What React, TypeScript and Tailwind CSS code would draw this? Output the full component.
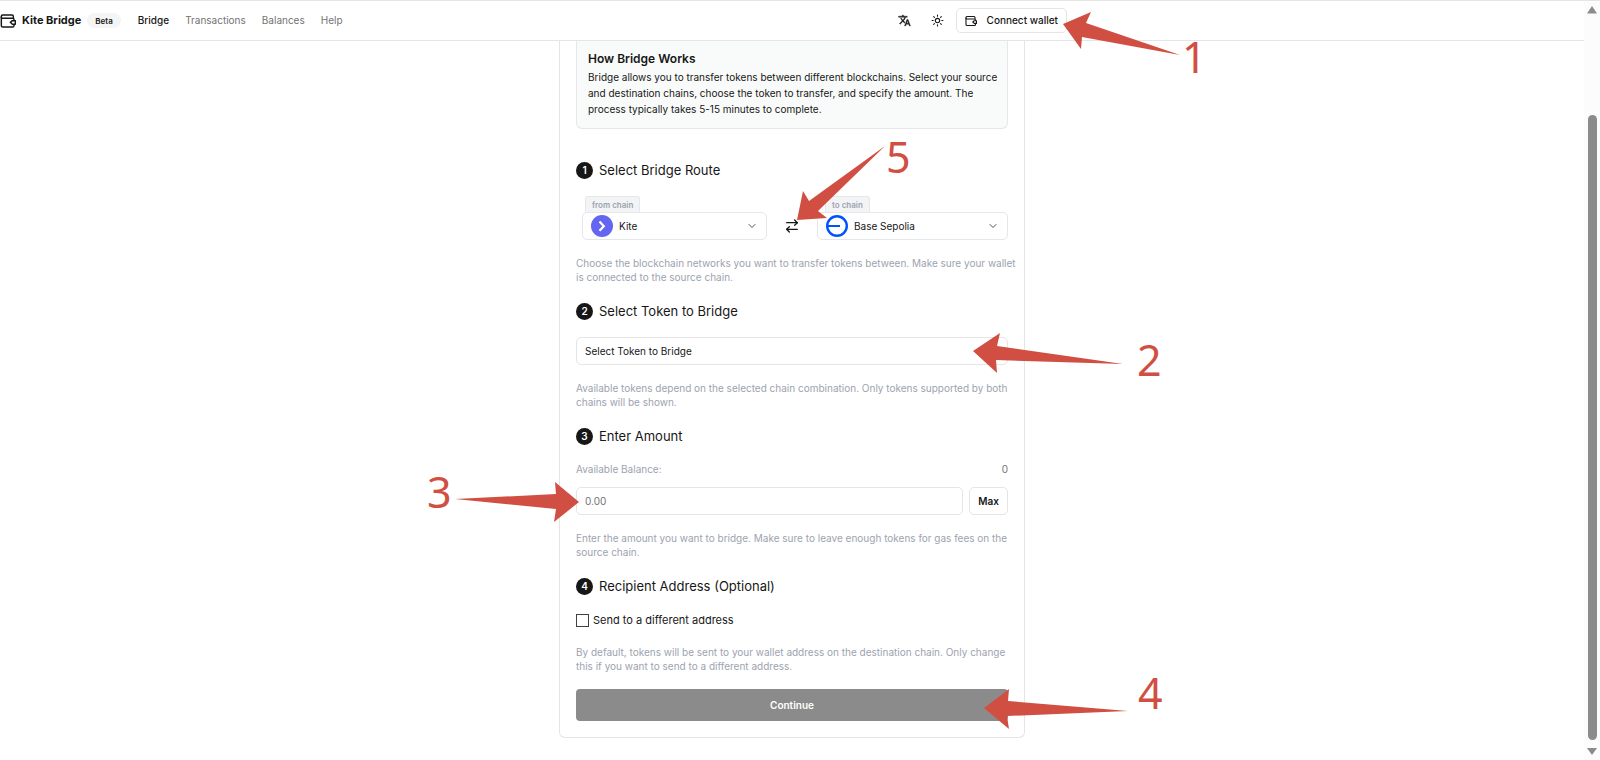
import { useState, type ReactNode } from "react";
import { ArrowRightLeft, ChevronDown, Sun } from "lucide-react";

function WalletIcon({ className }: { className: string }) {
  return (
    <svg viewBox="0 0 24 24" fill="none" stroke="currentColor" strokeWidth="2.200" strokeLinejoin="round" className={className} aria-hidden="true">
      <path d="M20 8V5a2 2 0 0 0-2-2H4a2 2 0 0 0-2 2v14a2 2 0 0 0 2 2h15a2 2 0 0 0 2-2v-2" />
      <path d="M2 5.500A2 2 0 0 0 4 8h15a2 2 0 0 1 2 2v1.500" />
      <path d="M23 11.500h-4.500L15.500 14l3 2.800H23z" />
    </svg>
  );
}

function TranslateIcon() {
  return (
    <svg viewBox="0 0 24 24" fill="currentColor" stroke="currentColor" strokeWidth="0.700" className="size-[13px]" aria-hidden="true">
      <path d="M12.870 15.070l-2.540-2.510.03-.03A17.520 17.520 0 0 0 14.070 6H17V4h-7V2H8v2H1v1.990h11.170C11.500 7.920 10.440 9.750 9 11.350 8.070 10.320 7.300 9.190 6.690 8h-2c.73 1.630 1.730 3.170 2.980 4.560l-5.090 5.020L4 19l5-5 3.110 3.110.76-2.040zM18.500 10h-2L12 22h2l1.120-3h4.750L21 22h2l-4.500-12zm-2.620 7l1.620-4.330L19.120 17h-3.240z" />
    </svg>
  );
}

function KiteLogo() {
  return (
    <svg viewBox="0 0 22 22" className="size-[22px] shrink-0" aria-hidden="true">
      <circle cx="11" cy="11" r="11" fill="#6366f1" />
      <path d="M8.500 6.500 12.800 11.200 8.500 15.800" fill="none" stroke="#fff" strokeWidth="2.200" />
    </svg>
  );
}

function BaseLogo() {
  return (
    <svg viewBox="0 0 22 22" className="size-[22px] shrink-0" aria-hidden="true">
      <circle cx="11" cy="11" r="9.800" fill="#fff" stroke="#0052ff" strokeWidth="2.400" />
      <path d="M1 11h13" stroke="#0052ff" strokeWidth="2" />
    </svg>
  );
}

function Step({ number, title, children, help }: { number: number; title: string; children: ReactNode; help: string }) {
  return (
    <section className="flex flex-col gap-4">
      <h2 className="flex h-[21px] items-center gap-1.5 pt-0.5 text-[13px]">
        <span className="flex size-[17px] items-center justify-center rounded-full bg-[#171717] text-[10px] font-semibold text-white">
          {number}
        </span>
        {title}
      </h2>
      {children}
      <p className="-mr-2.5 text-[10px] leading-[14px] text-[#9ca3af]">{help}</p>
    </section>
  );
}

function ChainSelect({ id, logo, value }: { id: string; logo: ReactNode; value: string }) {
  return (
    <div className="relative flex h-7 w-full items-center gap-1.5 rounded-[5px] border border-[#e5e7eb] bg-white pl-2">
      {logo}
      <select id={id} className="h-full min-w-0 flex-1 appearance-none bg-transparent text-[10px] outline-none">
        <option>{value}</option>
      </select>
      <ChevronDown className="pointer-events-none absolute right-2 size-3 text-[#525252]" />
    </div>
  );
}

function ChainLabel({ htmlFor, children }: { htmlFor: string; children: ReactNode }) {
  return (
    <label htmlFor={htmlFor} className="flex h-4 w-fit items-center rounded-t-[3px] border border-b-0 border-[#e5e7eb] bg-[#f3f4f6] px-1.5 text-[8px] font-semibold text-[#9ca3af]">
      {children}
    </label>
  );
}

const arrows = [
  "1063,24 1091,12 1086,23 1180,55 1082,37 1081,49",
  "797,220 803,191 809,201 885,146 818,211 827,218",
  "973,351 1000,333 997,346 1123,364 996,360 997,373",
  "579,502 555,482 556,494 455,499 556,509 554,522",
  "984,708 1009,689 1008,701 1128,711 1007,716 1009,729",
];

const arrowLabels = [
  { text: "1", x: 1182, y: 73 },
  { text: "2", x: 1137, y: 376 },
  { text: "3", x: 427, y: 508 },
  { text: "4", x: 1138, y: 709 },
  { text: "5", x: 886, y: 173 },
];

function Annotations() {
  return (
    <svg width="1600" height="760" viewBox="0 0 1600 760" className="pointer-events-none absolute -top-px left-1/2 z-20 -translate-x-1/2" fill="#d14f42">
      {arrows.map((points) => (
        <polygon key={points} points={points} />
      ))}
      {arrowLabels.map((l) => (
        <text key={l.text} x={l.x} y={l.y} className="font-['Noto_Sans',sans-serif] text-[43px]">
          {l.text}
        </text>
      ))}
    </svg>
  );
}

export default function App() {
  const [amount, setAmount] = useState("");
  return (
    <div className="relative flex min-h-screen overflow-x-clip border-t border-[#e5e5e5] bg-white font-['Inter',sans-serif] text-[#171717]">
      <div className="flex min-w-0 flex-1 flex-col">
        <header className="h-10 border-b border-[#e5e5e5]">
          <div className="flex h-full max-w-[1067px] items-center justify-between">
            <div className="flex items-center gap-[17px]">
              <div className="flex items-center gap-1.5">
                <WalletIcon className="size-4" />
                <span className="text-[11px] font-bold">Kite Bridge</span>
                <span className="flex h-[15px] items-center rounded-full bg-[#f5f5f5] px-2 text-[8px] font-semibold">Beta</span>
              </div>
              <nav className="flex gap-4 text-[10px] text-[#737373]">
                <a href="#bridge" className="font-medium text-[#171717]">Bridge</a>
                <a href="#transactions">Transactions</a>
                <a href="#balances">Balances</a>
                <a href="#help">Help</a>
              </nav>
            </div>
            <div className="flex items-center">
              <button aria-label="Language" className="mr-5"><TranslateIcon /></button>
              <button aria-label="Theme" className="mr-3"><Sun className="size-[13px]" /></button>
              <button className="flex h-[25px] items-center gap-2.5 rounded-[5px] border border-[#e5e5e5] px-2 text-[10px] font-medium">
                <WalletIcon className="size-3" />
                Connect wallet
              </button>
            </div>
          </div>
        </header>

        <main className="mx-auto w-full max-w-[466px] rounded-b-md border border-t-0 border-[#e5e5e5] px-4 pb-4">
          <div className="rounded-b-md border border-t-0 border-[#e5e7eb] bg-[#f9fbfa] pt-2 pr-1.5 pb-[11px] pl-[11px]">
            <h2 className="text-[12px] leading-5 font-semibold">How Bridge Works</h2>
            <p className="text-[10px] leading-[16px]">
              Bridge allows you to transfer tokens between different blockchains. Select your source and destination chains, choose the token to transfer, and specify the amount. The process typically takes 5-15 minutes to complete.
            </p>
          </div>

          <form className="mt-[30px] flex flex-col gap-4" onSubmit={(e) => e.preventDefault()}>
            <Step number={1} title="Select Bridge Route" help="Choose the blockchain networks you want to transfer tokens between. Make sure your wallet is connected to the source chain.">
              <div className="grid grid-cols-[1fr_50px_1fr] items-end">
                <div className="pl-1.5">
                  <div className="pl-[3px]"><ChainLabel htmlFor="from">from chain</ChainLabel></div>
                  <ChainSelect id="from" logo={<KiteLogo />} value="Kite" />
                </div>
                <button type="button" aria-label="Swap chains" className="flex h-7 items-center justify-center">
                  <ArrowRightLeft className="size-4" />
                </button>
                <div>
                  <div className="pl-2"><ChainLabel htmlFor="to">to chain</ChainLabel></div>
                  <ChainSelect id="to" logo={<BaseLogo />} value="Base Sepolia" />
                </div>
              </div>
            </Step>

            <Step number={2} title="Select Token to Bridge" help="Available tokens depend on the selected chain combination. Only tokens supported by both chains will be shown.">
              <div className="relative flex items-center">
                <select aria-label="Token" className="h-7 w-full appearance-none rounded-[5px] border border-[#e5e5e5] bg-white px-2 text-[10px]">
                  <option>Select Token to Bridge</option>
                </select>
                <ChevronDown className="pointer-events-none absolute right-2.5 size-2.5 text-[#525252]" />
              </div>
            </Step>

            <Step number={3} title="Enter Amount" help="Enter the amount you want to bridge. Make sure to leave enough tokens for gas fees on the source chain.">
              <div className="flex flex-col gap-2.5">
                <div className="flex justify-between text-[10px] leading-[15px]">
                  <label htmlFor="amount" className="text-[#9ca3af]">Available Balance:</label>
                  <span className="text-[#737373]">0</span>
                </div>
                <div className="flex gap-1.5">
                  <input id="amount" value={amount} onChange={(e) => setAmount(e.target.value)} placeholder="0.00" className="h-7 min-w-0 flex-1 rounded-[5px] border border-[#e5e5e5] px-2 text-[10px] placeholder:text-[#737373]" />
                  <button type="button" className="h-7 rounded-[5px] border border-[#e5e5e5] px-2 text-[10px] font-semibold">Max</button>
                </div>
              </div>
            </Step>

            <Step number={4} title="Recipient Address (Optional)" help="By default, tokens will be sent to your wallet address on the destination chain. Only change this if you want to send to a different address.">
              <label className="flex h-[17px] items-center gap-1 text-[11px]">
                <input type="checkbox" className="size-[13px] appearance-none border border-[#404040] bg-white checked:bg-[#404040]" />
                Send to a different address
              </label>
            </Step>

            <button type="submit" className="h-8 rounded bg-[#8b8b8b] text-[10px] font-semibold text-white">Continue</button>
          </form>
        </main>
      </div>

      <div className="flex w-4 shrink-0 flex-col items-center justify-between gap-[100px] bg-[#fcfcfc] text-[#8b8b8b]" aria-hidden="true">
        <svg viewBox="0 0 10 14" className="h-[14px] w-2.5" fill="currentColor"><path d="M5 5 10 12.500H0z" /></svg>
        <div className="-mb-[94px] w-[9px] flex-1 rounded-full bg-[#8b8b8b]" />
        <svg viewBox="0 0 10 14" className="h-[14px] w-2.5" fill="currentColor"><path d="M5 9 10 2H0z" /></svg>
      </div>
      <Annotations />
    </div>
  );
}
